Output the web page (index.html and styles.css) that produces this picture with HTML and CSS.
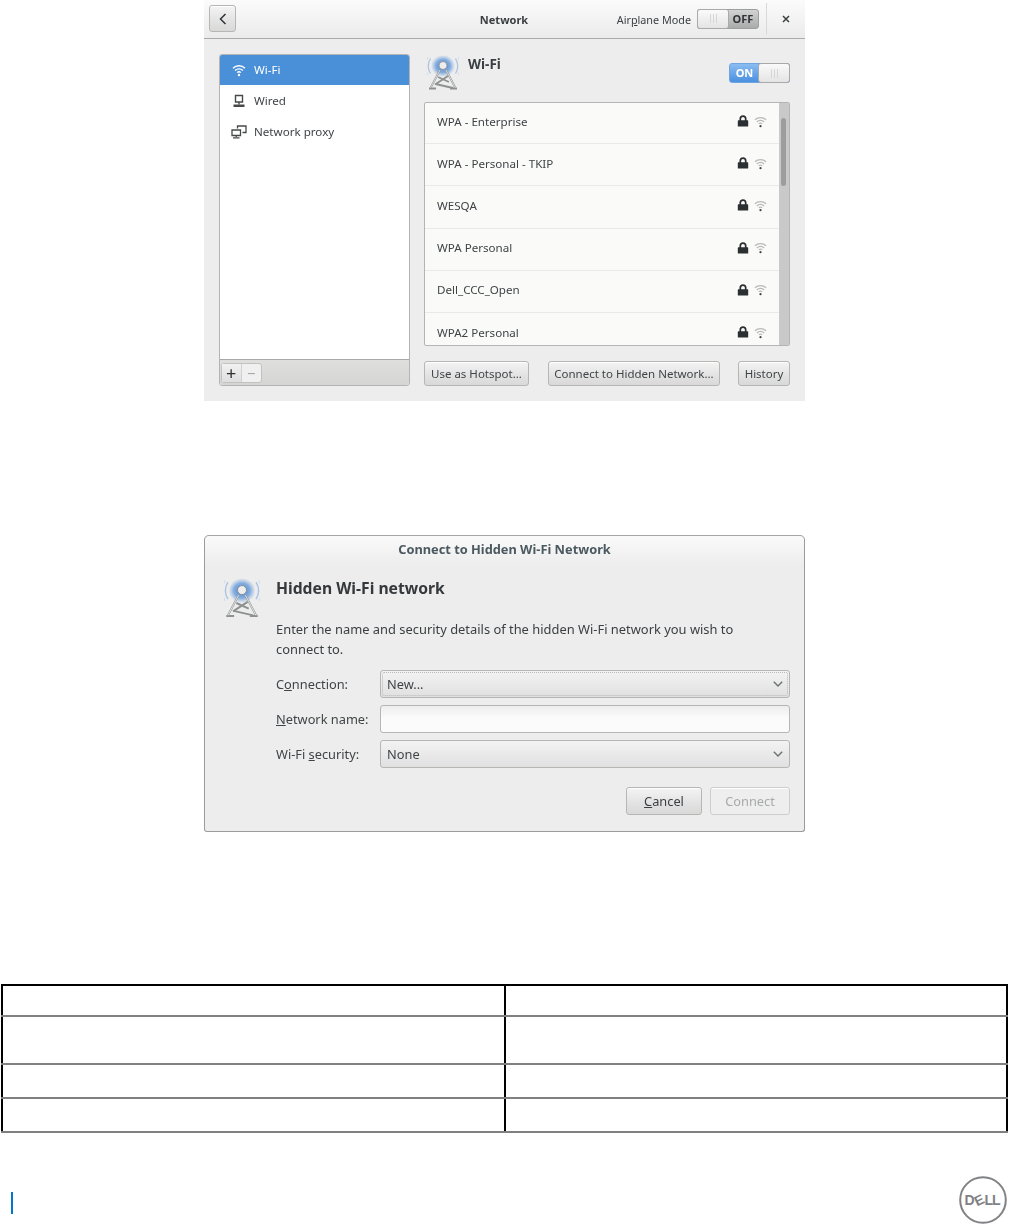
FILE: index.html
```html
<!DOCTYPE html>
<html lang="en">
<head>
<meta charset="utf-8">
<title>Network settings</title>
<link rel="stylesheet" href="styles.css">
</head>
<body>
<svg class="defs" width="0" height="0" aria-hidden="true">
  <defs>
    <radialGradient id="glow" cx="50%" cy="50%" r="50%">
      <stop offset="0" stop-color="#3f7fcf"/>
      <stop offset=".65" stop-color="#6d9fdc" stop-opacity=".8"/>
      <stop offset="1" stop-color="#a9c4e6" stop-opacity=".25"/>
    </radialGradient>
    <symbol id="tower" viewBox="0 0 32 36">
      <ellipse cx="16" cy="11" rx="11.500" ry="10.500" fill="url(#glow)"/>
      <path d="M3.500 3.500a14.500 14.500 0 0 0 0 15M28.500 3.500a14.500 14.500 0 0 1 0 15" fill="none" stroke="#a9c2e3" stroke-width="1.200"/>
      <path d="M1 2a18 18 0 0 0 0 18M31 2a18 18 0 0 1 0 18" fill="none" stroke="#cfdaea" stroke-width="1"/>
      <path d="M13 15 3.500 33M19 15 28.500 33M2 33.500h7M23 33.500h7M11 22l11 5M21 21 8 29.500M8.500 29 26 33" fill="none" stroke="#8d9190" stroke-width="1.800"/>
      <path d="M13 15 3.500 33M19 15 28.500 33" fill="none" stroke="#efefec" stroke-width=".8"/>
      <circle cx="16" cy="10.500" r="4" fill="#eeeeee" stroke="#85898c" stroke-width=".8"/>
    </symbol>
    <symbol id="wifi" viewBox="0 0 14 14">
      <path d="M1 5.200a8.500 8.500 0 0 1 12 0" fill="none" stroke="currentColor" stroke-width="1.400"/>
      <path d="M3.100 7.500a5.500 5.500 0 0 1 7.800 0" fill="none" stroke="currentColor" stroke-width="1.400"/>
      <path d="M5.200 9.600a2.600 2.600 0 0 1 3.600 0" fill="none" stroke="currentColor" stroke-width="1.300"/>
      <circle cx="7" cy="12" r="1.200" fill="var(--dot, currentColor)"/>
    </symbol>
    <symbol id="lock" viewBox="0 0 12 12">
      <path d="M3.300 6V3.800a2.700 2.700 0 0 1 5.400 0V6" fill="none" stroke="currentColor" stroke-width="1.700"/>
      <rect x=".8" y="5.300" width="10.400" height="6.200" rx=".6" fill="currentColor"/>
    </symbol>
    <symbol id="chev" viewBox="0 0 10 6">
      <path d="M.8.8 5 5l4.200-4.200" fill="none" stroke="#6b7072" stroke-width="1.400"/>
    </symbol>
  </defs>
</svg>

<main class="page">
  <section class="win settings">
    <header class="bar">
      <div class="bar-left">
        <button class="btn back" aria-label="Back">
          <svg width="8" height="12" viewBox="0 0 8 12"><path d="M6.500 1 1.500 6l5 5" fill="none" stroke="#2e3436" stroke-width="1.500"/></svg>
        </button>
      </div>
      <h1 class="bar-title">Network</h1>
      <div class="bar-right">
        <span class="air-label">Air<u>p</u>lane Mode</span>
        <div class="switch off"><span class="thumb"><i></i><i></i><i></i></span><span class="state">OFF</span></div>
        <span class="vsep"></span>
        <button class="close" aria-label="Close">
          <svg width="8" height="8" viewBox="0 0 8 8"><path d="M1 1l6 6M7 1 1 7" stroke="#3b4143" stroke-width="1.500"/></svg>
        </button>
      </div>
    </header>
    <div class="panes">
      <aside class="side">
        <ul class="side-list">
          <li class="side-row active">
            <svg class="side-ico" width="14" height="14"><use href="#wifi"/></svg>Wi-Fi
          </li>
          <li class="side-row">
            <svg class="side-ico" width="14" height="14" viewBox="0 0 14 14"><path d="M3.500 1.500h7v6.500h-7zM7 8v2.500" fill="none" stroke="#45494a" stroke-width="1.400"/><path d="M1.500 10.500h11v2.500h-11z" fill="#45494a"/></svg>Wired
          </li>
          <li class="side-row">
            <svg class="side-ico" width="16" height="14" viewBox="0 0 16 14"><path d="M6.500 3.500V1h8.500v6.500h-3.500M1 5h8.500v5.500H1zM5.200 10.500V12M2 12.800h6.500" fill="none" stroke="#45494a" stroke-width="1.300"/></svg>Network proxy
          </li>
        </ul>
        <div class="side-tools">
          <div class="seg">
            <span class="seg-btn plus">+</span><span class="seg-btn minus">−</span>
          </div>
        </div>
      </aside>
      <div class="main">
        <div class="main-head">
          <svg class="tower-big" width="32" height="36"><use href="#tower"/></svg>
          <h2 class="main-title">Wi-Fi</h2>
          <div class="switch on"><span class="state">ON</span><span class="thumb"><i></i><i></i><i></i></span></div>
        </div>
        <div class="list">
          <ul class="rows">
            <li class="row"><span>WPA - Enterprise</span><svg class="lock" width="12" height="12"><use href="#lock"/></svg><svg class="sig" width="13" height="13"><use href="#wifi"/></svg></li>
            <li class="row"><span>WPA - Personal - TKIP</span><svg class="lock" width="12" height="12"><use href="#lock"/></svg><svg class="sig" width="13" height="13"><use href="#wifi"/></svg></li>
            <li class="row"><span>WESQA</span><svg class="lock" width="12" height="12"><use href="#lock"/></svg><svg class="sig" width="13" height="13"><use href="#wifi"/></svg></li>
            <li class="row"><span>WPA Personal</span><svg class="lock" width="12" height="12"><use href="#lock"/></svg><svg class="sig" width="13" height="13"><use href="#wifi"/></svg></li>
            <li class="row"><span>Dell_CCC_Open</span><svg class="lock" width="12" height="12"><use href="#lock"/></svg><svg class="sig" width="13" height="13"><use href="#wifi"/></svg></li>
            <li class="row"><span>WPA2 Personal</span><svg class="lock" width="12" height="12"><use href="#lock"/></svg><svg class="sig" width="13" height="13"><use href="#wifi"/></svg></li>
          </ul>
          <div class="scroll"><span class="scroll-thumb"></span></div>
        </div>
        <div class="actions">
          <button class="btn act hotspot">Use as Hotspot...</button>
          <button class="btn act hidden-net">Connect to Hidden Network...</button>
          <button class="btn act history">History</button>
        </div>
      </div>
    </div>
  </section>

  <section class="win dialog">
    <header class="dlg-bar">Connect to Hidden Wi-Fi Network</header>
    <div class="dlg-body">
      <svg class="tower-dlg" width="36" height="41"><use href="#tower"/></svg>
      <div class="dlg-main">
        <h2 class="dlg-title">Hidden Wi-Fi network</h2>
        <p class="dlg-text">Enter the name and security details of the hidden Wi-Fi network you wish to connect to.</p>
        <div class="form">
          <label class="lab">C<u>o</u>nnection:</label>
          <div class="combo focus"><span class="focus-ring">New...</span><svg width="10" height="6"><use href="#chev"/></svg></div>
          <label class="lab"><u>N</u>etwork name:</label>
          <div class="entry"></div>
          <label class="lab">Wi-Fi <u>s</u>ecurity:</label>
          <div class="combo"><span class="focus-none">None</span><svg width="10" height="6"><use href="#chev"/></svg></div>
        </div>
        <div class="dlg-actions">
          <button class="btn dlg-btn cancel"><u>C</u>ancel</button>
          <button class="btn dlg-btn connect">Connect</button>
        </div>
      </div>
    </div>
  </section>

  <table class="doc-table">
    <tr class="r1"><td></td><td></td></tr>
    <tr class="r2"><td></td><td></td></tr>
    <tr class="r3"><td></td><td></td></tr>
    <tr class="r3"><td></td><td></td></tr>
  </table>

  <footer class="foot">
    <span class="foot-bar"></span>
    <svg class="dell" width="48" height="48" viewBox="0 0 48 48" role="img" aria-label="Dell">
      <circle cx="24" cy="24" r="22.800" fill="none" stroke="#808285" stroke-width="2"/>
      <g class="dell-type">
        <text x="5.500" y="29">D</text>
        <text x="15.500" y="29" transform="rotate(-25 20 24)">E</text>
        <text x="25.500" y="29">L</text>
        <text x="33" y="29">L</text>
      </g>
    </svg>
  </footer>
</main>
</body>
</html>
```
FILE: styles.css
```css
* { box-sizing: border-box; }
html, body { margin: 0; padding: 0; background: #fff; }
body { font-family: "Noto Sans", "Open Sans", sans-serif; font-size: 11.6px; color: #2e3436; }
ul { list-style: none; margin: 0; padding: 0; }
h1, h2, p { margin: 0; }
button { font: inherit; color: inherit; padding: 0; }
.defs { position: absolute; }
.page { width: 1009px; height: 1226px; overflow: hidden; }

.win { width: 601px; margin-left: 204px; background: #ededed; filter: blur(.35px); }
.settings { height: 401px; border-radius: 6px 6px 0 0; }
.dialog { height: 297px; margin-top: 134px; border: 1px solid #9b9b9b; border-radius: 5px 5px 3px 3px; border-top-color: #a5a5a5; background: #ededed; }

.btn { border: 1px solid #b6b6b3; border-radius: 3px; background: linear-gradient(#f4f4f4, #e2e2e2 60%, #d9d9d9); box-shadow: 0 1px 0 #fff inset; }

.bar { height: 39px; display: grid; grid-template-columns: 1fr auto 1fr; align-items: center; border-bottom: 1px solid #aaaaaa; background: linear-gradient(#fbfbfb, #ebebeb); padding: 0 13px 0 5px; }
.bar-left { display: flex; }
.back { width: 27px; height: 27px; display: flex; align-items: center; justify-content: center; margin-top: -1px; }
.bar-title { font-size: 11px; font-weight: 700; color: #3a3f41; margin-left: 7px; }
.bar-right { display: flex; align-items: center; justify-content: flex-end; }
.air-label { color: #3c4143; margin-right: 6px; font-size: 10.8px; }
.vsep { width: 1px; height: 32px; background: #d9d9d9; margin: 0 11px 0 7px; }
.close { border: 0; background: none; width: 14px; height: 14px; display: flex; align-items: center; justify-content: center; margin-left: 1px; margin-right: -1px; }

.switch { height: 20px; display: flex; border: 1px solid #9b9f9d; border-radius: 3px; font-weight: 700; font-size: 11px; line-height: 18px; }
.switch .thumb { width: 30px; background: linear-gradient(#fafafa, #e4e4e4); border-radius: 2px; display: flex; justify-content: center; align-items: center; gap: 2px; box-shadow: 0 0 0 1px #a9a9a9; }
.switch .thumb i { width: 1px; height: 9px; background: #d6d6d6; }
.switch .state { flex: 1; text-align: center; }
.switch.off { width: 62px; margin-top: -1px; background: linear-gradient(#d2d3d2, #a9abaa); color: #2f3436; }
.switch.on { width: 61px; background: linear-gradient(#8abcf0, #4a90e0); border-color: #6ea5e2; color: #fff; }

.panes { display: flex; padding: 15px 15px 0; gap: 14px; }
.side { width: 191px; height: 332px; background: #fff; border: 1px solid #b4b4b4; border-radius: 3px; display: flex; flex-direction: column; overflow: hidden; }
.side-list { flex: 1; }
.side-row { height: 31px; display: flex; align-items: center; padding: 0 0 2px 11px; color: #3f4446; }
.side-row.active { background: #4a90d9; color: #fff; height: 30px; margin-bottom: 1px; padding-bottom: 1px; }
.side-ico { width: 16px; margin-right: 7px; flex: none; }
.side-tools { height: 26px; flex: none; background: linear-gradient(#dfdfdd, #d5d5d3); border-top: 1px solid #a9a9a9; padding: 3px 0 0 1px; }
.seg { width: 41px; height: 20px; display: flex; border: 1px solid #c2c2c0; border-radius: 3px; background: #f0f0f0; }
.seg-btn { width: 20px; display: flex; align-items: center; justify-content: center; line-height: 1; }
.plus { font-size: 18px; font-weight: 400; color: #2c3032; background: linear-gradient(#f2f2f2, #dedede); border-right: 1px solid #d0d0d0; }
.minus { font-size: 15px; color: #a5a7a7; }

.main { width: 366px; }
.main-head { height: 48px; display: flex; align-items: flex-start; }
.tower-big { flex: none; margin: 1px 0 0 3px; }
.main-title { font-size: 13.500px; font-weight: 700; color: #3a3f41; margin: 0 auto 0 9px; line-height: 20px; }
.main-head .switch { margin-top: 9px; }
.list { height: 244px; display: flex; border: 1px solid #b4b4b4; border-radius: 2px; background: #fafaf9; overflow: hidden; }
.rows { flex: 1; overflow: hidden; margin-top: -1px; }
.row { height: 42.200px; display: flex; align-items: center; padding: 0 12px 3px 12px; border-bottom: 1px solid #e9e9e8; color: #3f4446; }
.row span { margin-right: auto; }
.lock { color: #2b2f31; margin-right: 5px; }
.sig { color: #b9b9b9; --dot: #3f4446; }
.scroll { width: 10px; flex: none; background: #c9c9c9; padding: 15px 2px 0 2px; }
.scroll-thumb { display: block; height: 68px; width: 5px; border-radius: 3px; background: #9d9d9d; }
.actions { display: flex; margin-top: 15px; }
.act { height: 25px; line-height: 21px; color: #3f4446; font-size: 11.500px; }
.hotspot { width: 105px; margin-right: 19px; }
.hidden-net { width: 172px; margin-right: 18px; }
.history { width: 52px; }

.dlg-bar { height: 29px; text-align: center; line-height: 27px; font-weight: 700; color: #4b5a60; font-size: 12.800px; background: linear-gradient(#fafafa, #ededed); border-radius: 5px 5px 0 0; }
.dlg-body { display: flex; padding: 13px 14px 0 18px; }
.tower-dlg { flex: none; margin: 0 16px 0 1px; }
.dlg-main { flex: 1; }
.dlg-title { font-size: 15.700px; font-weight: 700; line-height: 20px; color: #35393b; }
.dlg-text { font-size: 12.900px; line-height: 19.500px; margin-top: 22px; margin-right: 30px; color: #3a3f41; }
.form { display: grid; grid-template-columns: 104px 1fr; row-gap: 7px; margin-top: 11px; align-items: center; }
.lab { font-size: 12.800px; color: #3f4446; }
.combo, .entry { height: 28px; border: 1px solid #b6b6b3; border-radius: 3px; }
.combo { display: flex; align-items: center; justify-content: space-between; padding: 0 6px 0 6px; background: linear-gradient(#f3f3f3, #e0e0e0); font-size: 12.800px; color: #3f4446; }
.combo.focus { position: relative; }
.focus-ring::after { content: ""; position: absolute; inset: 1px; border: 1px dotted #b8b8b8; border-radius: 2px; pointer-events: none; }
.entry { background: linear-gradient(#ededed, #fbfbfb 45%); }
.dlg-actions { display: flex; justify-content: flex-end; gap: 8px; margin-top: 19px; }
.dlg-btn { height: 28px; font-size: 12.800px; }
.cancel { width: 76px; color: #3a3f41; }
.connect { width: 80px; color: #a8aaaa; background: #eeeeee; border-color: #cdcdcb; }

.doc-table { width: 1007px; margin: 152px 0 0 1px; border-collapse: collapse; table-layout: fixed; border-top: 2px solid #000; border-left: 2px solid #000; border-right: 2px solid #000; }
.doc-table td { padding: 0; border-bottom: 2px solid #808080; }
.doc-table td:first-child { border-right: 2px solid #000; width: 503px; }
.r1 { height: 31px; }
.r2 { height: 48px; }
.r3 { height: 34px; }

.foot { height: 92px; display: flex; justify-content: space-between; align-items: flex-start; padding-left: 11px; padding-right: 2px; }
.foot-bar { width: 2px; height: 22px; margin-top: 59px; background: #0076ce; }
.dell { margin-top: 43px; }
.dell-type text { font-family: "Liberation Sans", sans-serif; font-weight: 700; font-size: 14px; fill: #808285; }
```
